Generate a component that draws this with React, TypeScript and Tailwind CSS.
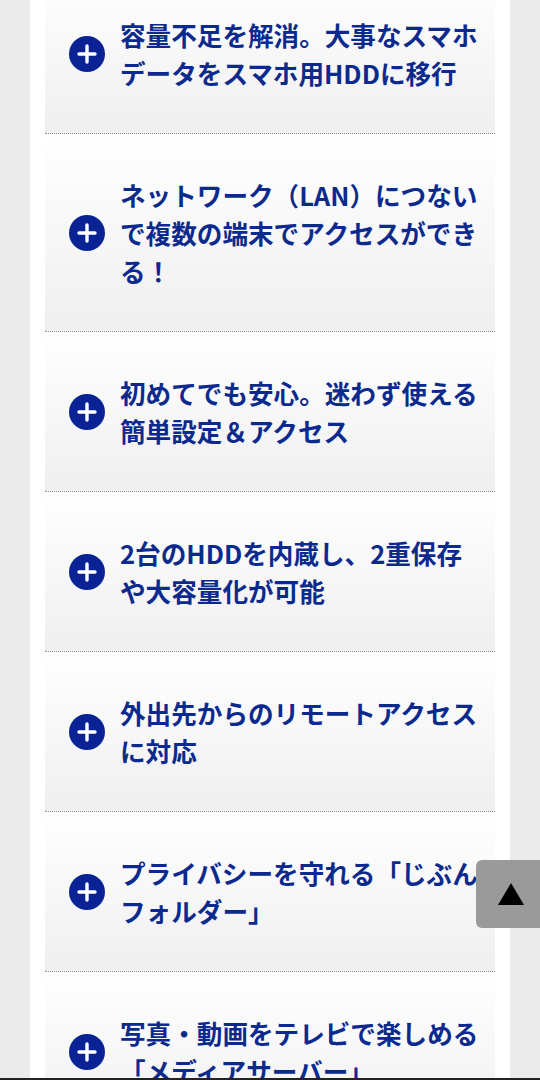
import React from "react";

const items = [
  "容量不足を解消。大事なスマホデータをスマホ用HDDに移行",
  "ネットワーク（LAN）につないで複数の端末でアクセスができる！",
  "初めてでも安心。迷わず使える簡単設定＆アクセス",
  "2台のHDDを内蔵し、2重保存や大容量化が可能",
  "外出先からのリモートアクセスに対応",
  "プライバシーを守れる「じぶんフォルダー」",
  "写真・動画をテレビで楽しめる「メディアサーバー」",
];

const PlusIcon = () => (
  <svg width="36" height="36" viewBox="0 0 36 36" className="shrink-0">
    <circle cx="18" cy="18" r="18" fill="#0a2394" />
    <path d="M18 10v16M10 18h16" stroke="#fff" strokeWidth="3.4" strokeLinecap="round" />
  </svg>
);

const App = () => {
  return (
    <div
      lang="ja"
      className="h-[1080px] overflow-hidden bg-[#ebebeb]"
      style={{ fontFamily: '"Noto Sans CJK JP", "Noto Sans", sans-serif' }}
    >
      <div className="mx-[30px] flow-root h-full bg-white px-[15px]">
        <ul className="-mt-[26px]">
          {items.map((text) => (
            <li
              key={text}
              className="flex cursor-pointer items-center gap-[15px] border-b border-dotted border-[#8a8a8a] bg-linear-to-b from-white to-[#efefef] pt-[42px] pb-[41px] pl-[24px]"
            >
              <PlusIcon />
              <span className="w-[360px] text-[25.6px] leading-[38px] font-bold text-[#0c2a8e]">
                {text}
              </span>
            </li>
          ))}
        </ul>
      </div>

      {/* scroll to top */}
      <div className="fixed top-[860px] left-[476px] flex h-[68px] w-[72px] items-center rounded-md bg-[#9a9a9a] pl-[22px]">
        <svg width="26" height="22" viewBox="0 0 26 22">
          <path d="M13 0L26 22H0Z" fill="#000" />
        </svg>
      </div>

      <div className="fixed bottom-0 left-0 h-[2px] w-full bg-[#222]" />
    </div>
  );
};

export default App;
